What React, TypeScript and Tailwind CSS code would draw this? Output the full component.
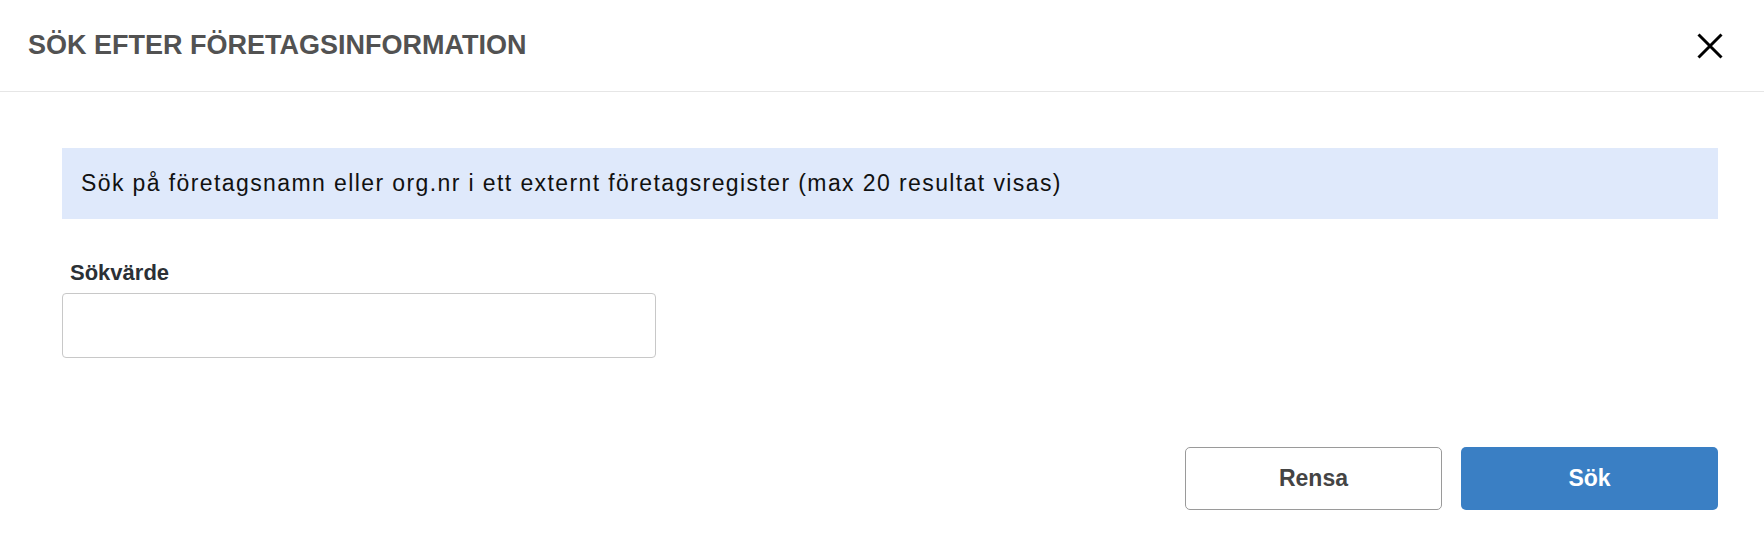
import React, { useState } from "react";

export default function App() {
  const [query, setQuery] = useState("");

  return (
    <div className="min-h-[540px] w-full bg-white font-['Liberation_Sans',Arial,sans-serif]">
      <div className="flex h-[92px] items-center justify-between border-b border-[#e6e6e6] pl-[28px] pr-[41px]">
        <h1 className="text-[27px] font-bold text-[#525252]">
          SÖK EFTER FÖRETAGSINFORMATION
        </h1>
        <button aria-label="Stäng" className="flex h-[26px] w-[26px] items-center justify-center">
          <svg width="26" height="26" viewBox="0 0 26 26" fill="none">
            <path d="M1.5 1.5L24.5 24.5M24.5 1.5L1.5 24.5" stroke="#000" strokeWidth="3" />
          </svg>
        </button>
      </div>

      <div className="pl-[62px] pr-[46px] pt-[56px]">
        <div className="flex h-[71px] items-center bg-[#dfe9fb] px-[19px]">
          <p className="text-[23px] tracking-[1.4px] text-[#111]">
            Sök på företagsnamn eller org.nr i ett externt företagsregister (max 20 resultat visas)
          </p>
        </div>

        <label className="mt-[37px] block pl-[8px] text-[22px] font-bold text-[#2b3035]">
          Sökvärde
        </label>
        <input
          type="text"
          value={query}
          onChange={(e) => setQuery(e.target.value)}
          className="mt-[4px] h-[65px] w-[594px] rounded-[4px] border border-[#c8c8c8] px-3 text-[20px] focus:outline-none"
        />

        <div className="mt-[89px] flex justify-end gap-[19px]">
          <button className="h-[63px] w-[257px] rounded-[5px] border border-[#9a9a9a] bg-white text-[23px] font-bold text-[#444]">
            Rensa
          </button>
          <button className="h-[63px] w-[257px] rounded-[5px] bg-[#3a7fc4] text-[23px] font-bold text-white">
            Sök
          </button>
        </div>
      </div>
    </div>
  );
}
